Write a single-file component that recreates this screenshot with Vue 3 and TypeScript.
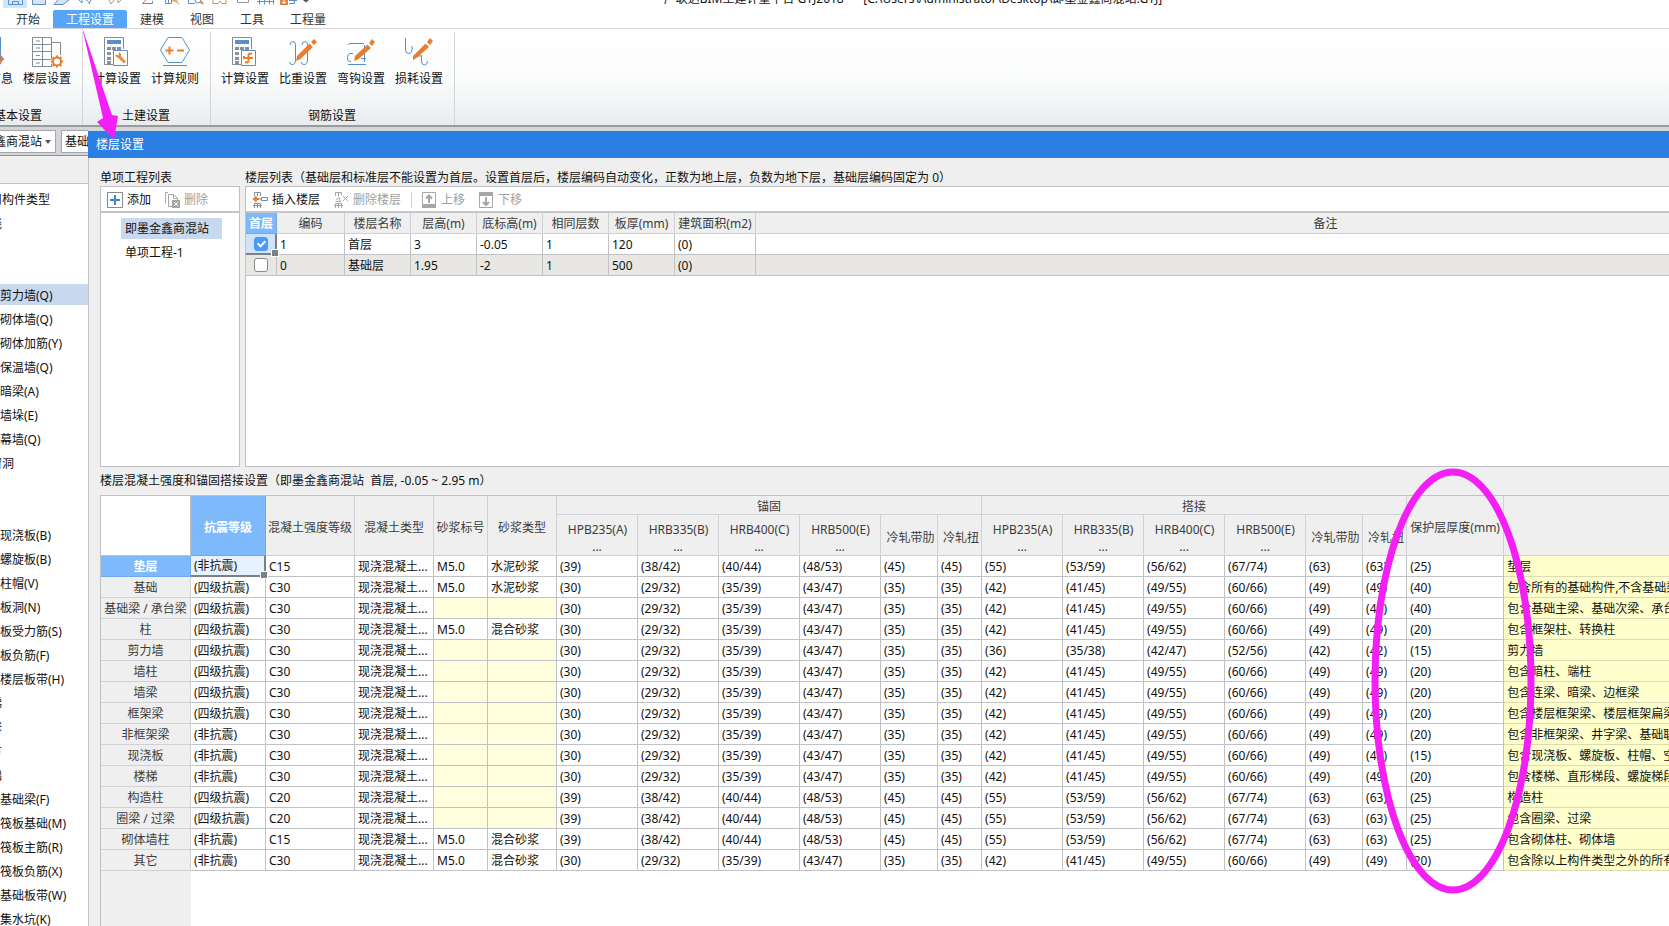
<script setup lang="ts">
import { ref } from 'vue'

const tabs = ['开始', '工程设置', '建模', '视图', '工具', '工程量']
const activeTab = ref('工程设置')

interface Tool { label: string; icon: string }
const groups: { title: string; cls: string; tools: Tool[] }[] = [
  { title: '基本设置', cls: 'group-basic', tools: [{ label: '工程信息', icon: 'info' }, { label: '楼层设置', icon: 'floor' }] },
  { title: '土建设置', cls: '', tools: [{ label: '计算设置', icon: 'calc-wrench' }, { label: '计算规则', icon: 'rule' }] },
  {
    title: '钢筋设置',
    cls: '',
    tools: [
      { label: '计算设置', icon: 'calc-bar' },
      { label: '比重设置', icon: 'weight' },
      { label: '弯钩设置', icon: 'hook' },
      { label: '损耗设置', icon: 'loss' },
    ],
  },
]

interface NavItem { text: string; sub?: boolean; selected?: boolean }
const nav: NavItem[] = [
  { text: '常用构件类型' },
  { text: '轴线' },
  { text: '柱' },
  { text: '墙' },
  { text: '剪力墙(Q)', sub: true, selected: true },
  { text: '砌体墙(Q)', sub: true },
  { text: '砌体加筋(Y)', sub: true },
  { text: '保温墙(Q)', sub: true },
  { text: '暗梁(A)', sub: true },
  { text: '墙垛(E)', sub: true },
  { text: '幕墙(Q)', sub: true },
  { text: '门窗洞' },
  { text: '梁' },
  { text: '板' },
  { text: '现浇板(B)', sub: true },
  { text: '螺旋板(B)', sub: true },
  { text: '柱帽(V)', sub: true },
  { text: '板洞(N)', sub: true },
  { text: '板受力筋(S)', sub: true },
  { text: '板负筋(F)', sub: true },
  { text: '楼层板带(H)', sub: true },
  { text: '楼梯' },
  { text: '装修' },
  { text: '土方' },
  { text: '基础' },
  { text: '基础梁(F)', sub: true },
  { text: '筏板基础(M)', sub: true },
  { text: '筏板主筋(R)', sub: true },
  { text: '筏板负筋(X)', sub: true },
  { text: '基础板带(W)', sub: true },
  { text: '集水坑(K)', sub: true },
]

const projects = ['即墨金鑫商混站', '单项工程-1']
const currentProject = ref(projects[0])

const floorHeads = ['编码', '楼层名称', '层高(m)', '底标高(m)', '相同层数', '板厚(mm)', '建筑面积(m2)']
const floors = ref([
  { first: true, cells: ['1', '首层', '3', '-0.05', '1', '120', '(0)'] },
  { first: false, cells: ['0', '基础层', '1.95', '-2', '1', '500', '(0)'] },
])

const steel = ['HPB235(A)', 'HRB335(B)', 'HRB400(C)', 'HRB500(E)']
const plainHeads = ['混凝土强度等级', '混凝土类型', '砂浆标号', '砂浆类型']

const A39 = ['(39)', '(38/42)', '(40/44)', '(48/53)', '(45)', '(45)', '(55)', '(53/59)', '(56/62)', '(67/74)', '(63)', '(63)']
const A30 = ['(30)', '(29/32)', '(35/39)', '(43/47)', '(35)', '(35)', '(42)', '(41/45)', '(49/55)', '(60/66)', '(49)', '(49)']
const WALL = ['(30)', '(29/32)', '(35/39)', '(43/47)', '(35)', '(35)', '(36)', '(35/38)', '(42/47)', '(52/56)', '(42)', '(42)']

interface Row { name: string; seismic: string; grade: string; mark: string; mortar: string; values: string[]; cover: string; note: string }
const row = (name: string, seismic: string, grade: string, mortar: string, values: string[], cover: string, note: string): Row => ({
  name, seismic, grade, mark: mortar ? 'M5.0' : '', mortar, values, cover, note,
})
const Q4 = '(四级抗震)'
const NO = '(非抗震)'
const rows: Row[] = [
  row('垫层', NO, 'C15', '水泥砂浆', A39, '(25)', '垫层'),
  row('基础', Q4, 'C30', '水泥砂浆', A30, '(40)', '包含所有的基础构件,不含基础梁'),
  row('基础梁 / 承台梁', Q4, 'C30', '', A30, '(40)', '包含基础主梁、基础次梁、承台梁'),
  row('柱', Q4, 'C30', '混合砂浆', A30, '(20)', '包含框架柱、转换柱'),
  row('剪力墙', Q4, 'C30', '', WALL, '(15)', '剪力墙'),
  row('墙柱', Q4, 'C30', '', A30, '(20)', '包含暗柱、端柱'),
  row('墙梁', Q4, 'C30', '', A30, '(20)', '包含连梁、暗梁、边框梁'),
  row('框架梁', Q4, 'C30', '', A30, '(20)', '包含楼层框架梁、楼层框架扁梁'),
  row('非框架梁', NO, 'C30', '', A30, '(20)', '包含非框架梁、井字梁、基础联系梁'),
  row('现浇板', NO, 'C30', '', A30, '(15)', '包含现浇板、螺旋板、柱帽、空心板'),
  row('楼梯', NO, 'C30', '', A30, '(20)', '包含楼梯、直形梯段、螺旋梯段'),
  row('构造柱', Q4, 'C20', '', A39, '(25)', '构造柱'),
  row('圈梁 / 过梁', Q4, 'C20', '', A39, '(25)', '包含圈梁、过梁'),
  row('砌体墙柱', NO, 'C15', '混合砂浆', A39, '(25)', '包含砌体柱、砌体墙'),
  row('其它', NO, 'C30', '混合砂浆', A30, '(20)', '包含除以上构件类型之外的所有构件'),
]
</script>

<template>
  <div class="app">
    <header class="titlebar">
      <div class="quick">
        <button class="q on" aria-label="保存"><svg viewBox="0 0 24 10"><path d="M5.500 0V4.500H19.500V0M9.500 4.500V1.500H15.500V4.500" /></svg></button>
        <button class="q" aria-label="新建"><svg viewBox="0 0 24 10"><path class="sky" d="M5.500 0V4.500H18.500V0" /></svg></button>
        <button class="q" aria-label="打开"><svg viewBox="0 0 24 10"><path class="sky" d="M7 0L3 4.500H12L18 0" /></svg></button>
        <button class="q" aria-label="撤销"><svg viewBox="0 0 24 10"><path d="M4 0L7 3V0M11 0C13 1 15 2 14 4M16 0L14 4" /></svg></button>
        <button class="q gap-s" aria-label="恢复"><svg viewBox="0 0 24 10"><path class="gray" d="M6 0L8 4M11 0L8 4M15 0V3L18 0" /></svg></button>
        <button class="q gap-l" aria-label="汇总"><svg viewBox="0 0 24 10"><path d="M10 0L6.500 3.500H16.500V1" /></svg></button>
        <button class="q" aria-label="查看"><svg viewBox="0 0 24 10"><path d="M5.500 0V3.500H11.500V0M8.500 0V3.500" /><path class="org" d="M12 1H18M14 0L19 4" /></svg></button>
        <button class="q" aria-label="查找"><svg viewBox="0 0 24 10"><path d="M4.500 0V3.500H11" /><circle cx="14" cy="0" r="3" /><path class="org" d="M16 1L19 4" stroke-width="2" /></svg></button>
        <button class="q" aria-label="绑定"><svg viewBox="0 0 24 10"><path class="org" d="M5 0V3.500H10L12 1L14 3.500H18V0" /></svg></button>
        <button class="q" aria-label="锁定"><svg viewBox="0 0 24 10"><path class="gray" d="M6.500 0V2.500H17.500V0" /></svg></button>
        <button class="q" aria-label="轴网"><svg viewBox="0 0 24 10"><path d="M3 1.500H20M5.500 0V4.500M10.500 0V4.500M15.500 0V4.500M19.500 0V4.500" /></svg></button>
        <button class="q" aria-label="添加"><svg viewBox="0 0 24 10"><path d="M12 3.500H17.500V0M12 0.500H20" /><path d="M3 0H11V5H3Z" class="solid" /><path class="wht" d="M7 0V4M5 2.500H9" /></svg></button>
        <button class="q narrow" aria-label="更多"><svg viewBox="0 0 12 10"><path class="tri" d="M3 0H9L6 2.500Z" /></svg></button>
      </div>
      <div class="title">广联达BIM土建计量平台 GTJ2018&nbsp; -&nbsp; &nbsp;[C:\Users\Administrator\Desktop\即墨金鑫商混站.GTJ]</div>
    </header>

    <nav class="tabs">
      <button v-for="t in tabs" :key="t" class="tab" :class="{ active: t === activeTab }" @click="activeTab = t">{{ t }}</button>
    </nav>

    <section class="ribbon">
      <div v-for="g in groups" :key="g.title" class="group" :class="g.cls">
        <div class="tools">
          <button v-for="t in g.tools" :key="t.label" class="tool">
            <svg class="ico" viewBox="0 0 32 32">
              <g v-if="t.icon === 'info'">
                <path class="b" d="M6 1.500H27.500V28H6" /><path class="bf" d="M6 1H28V7H6Z" />
                <circle class="o2" cx="25" cy="23" r="4" /><path class="o2" d="M25 17V19M25 27V30M19 23H21M29 23H31" />
              </g>
              <g v-else-if="t.icon === 'floor'">
                <path class="g" d="M1.500 1.500H20.500V30.500H1.500ZM11.500 1.500V30.500M1.500 8.500H20.500M1.500 15.500H20.500M1.500 23.500H20.500M5 5H9M5 12H9M5 19.500H9M5 27H9M20.500 6.500H29.500V19" />
                <circle class="whitefill" cx="26" cy="25.500" r="6" />
                <circle class="o2" cx="26" cy="25.500" r="4" />
                <path class="o2" d="M26 19.500V21M26 30V31.500M20 25.500H21.500M30.500 25.500H32M21.500 21.500L23 23M29 28.500L30.500 30M30.500 21L29 22.500M21.500 30L23 28.500" />
              </g>
              <g v-else-if="t.icon === 'rule'">
                <path class="b" d="M9 1.500H23L30.500 14L23 26.500H9L1.500 14ZM4 29.500H28" />
                <path class="o2" d="M6.500 14.500H14.500M10.500 10.500V18.500M18 14.500H25" />
              </g>
              <g v-else-if="t.icon === 'calc-wrench' || t.icon === 'calc-bar'">
                <path class="g" d="M3.500 1.500H22.500V13M3.500 1.500V28.500H12" />
                <path class="bf" d="M6 4H20V8H6Z" />
                <path class="gf" d="M6 11H10V14H6ZM11 11H15V14H11ZM16 11H20V14H16ZM6 16H10V19H6ZM6 21H10V24H6ZM6 25H10V28H6Z" />
                <path d="M12.500 14.500H26.500V29.500H12.500Z" class="b whitefill" />
                <template v-if="t.icon === 'calc-wrench'">
                  <path class="o3" d="M18 20.500L24 26.500" />
                  <path class="o2" d="M15 19A3 3 0 0 0 19 20A3 3 0 0 0 18 17" />
                </template>
                <path v-else class="o2" d="M23 18Q19.500 16.500 19.500 19.500V24.500Q19.500 27.500 16 26M15 22H24M15 20V23" />
              </g>
              <g v-else-if="t.icon === 'weight'">
                <path class="b" d="M3 9Q3 5.500 6 5.500Q8.500 5.500 8.500 9V24Q8.500 28.500 5 28.500Q3 28.500 2.500 26M15 9Q15 5.500 18 5.500Q20.500 5.500 20.500 9V24Q20.500 28.500 17 28.500Q14.500 28.500 14 26" />
                <path class="of" d="M10 20L22.500 7.500L26 11L13.500 23L9 25ZM24 6L27 3L30 6L27 9Z" />
              </g>
              <g v-else-if="t.icon === 'hook'">
                <path class="b" d="M3 9Q3 7.500 6 7.500H19M3 28.500H21M19.500 9V26M16 15.500H21M16 22.500H21M8 17.500H5Q2.500 18 2.500 23Q2.500 26 6 25.500" />
                <path class="of" d="M10 20L22.500 8.500L26 12L13.500 23L9 25ZM24 7L27 3L30 6L27 10Z" />
              </g>
              <g v-else>
                <path class="b" d="M2.500 2V14Q2.500 17.500 5.500 17.500Q9 17.500 9 13V10M12.500 20H19M18.500 19V25Q18.500 29 21.500 29Q24.500 29 24.500 25" />
                <path class="of" d="M10 20L22.500 7.500L26 11L13.500 22L10 24ZM24 6L27 2L30 5L27 9Z" />
              </g>
            </svg>
            <span>{{ t.label }}</span>
          </button>
        </div>
        <div class="gtitle">{{ g.title }}</div>
      </div>
    </section>

    <main class="work">
      <aside class="side">
        <div class="combos">
          <div class="combo first">
            <select aria-label="单项工程"><option>即墨金鑫商混站</option></select>
            <svg viewBox="0 0 6 4"><path class="tri" d="M0 0H6L3 4Z" /></svg>
          </div>
          <div class="combo second">
            <select aria-label="楼层"><option>基础层</option></select>
          </div>
        </div>
        <div class="side-head"></div>
        <ul class="nav">
          <li v-for="n in nav" :key="n.text" :class="{ selected: n.selected, sub: n.sub }"><a href="#">{{ n.text }}</a></li>
        </ul>
      </aside>

      <section class="dialog">
        <h1 class="dlg-title">楼层设置</h1>
        <div class="dlg-body">
          <div class="top">
            <div class="col projects">
              <h2>单项工程列表</h2>
              <div class="panel">
                <div class="bar">
                  <button class="act">
                    <svg viewBox="0 0 16 16"><path class="g" d="M0.500 0.500H15.500V15.500H0.500Z" /><path class="plus" d="M8 3V13M3 8H13" /></svg>添加
                  </button>
                  <button class="act" disabled>
                    <svg viewBox="0 0 16 16"><path class="dis" d="M1.500 11.500V0.500H4M4.500 2.500H9.500L13.500 6V9M9.500 2.500V6.500H13.500M4.500 2.500V14.500H8" /><path class="disf" d="M8 8H16V16H8Z" /><path class="wht" d="M10 10L14 14M14 10L10 14" /></svg>删除
                  </button>
                </div>
                <ul class="plist">
                  <li v-for="p in projects" :key="p"><button :class="{ on: p === currentProject }" @click="currentProject = p">{{ p }}</button></li>
                </ul>
              </div>
            </div>
            <div class="col floors">
              <h2>楼层列表（基础层和标准层不能设置为首层。设置首层后，楼层编码自动变化，正数为地上层，负数为地下层，基础层编码固定为 0）</h2>
              <div class="panel">
                <div class="bar">
                  <button class="act">
                    <svg viewBox="0 0 16 16"><path class="dis2" d="M2.500 4V0.500H8.500V4M5.500 0.500V4M2.500 16V11.500H8.500V16M5.500 11.500V16M1 13.500H10" /><path class="b" d="M9.500 5.500H15.500V8.500H9.500ZM7 7H9" /><path class="o2" d="M7 7H2M4.500 4.500L2 7L4.500 9.500" /></svg>插入楼层
                  </button>
                  <button class="act" disabled>
                    <svg viewBox="0 0 16 16"><path class="dis" d="M2.500 4V0.500H8.500V3M5.500 0.500V4M2.500 16V11.500H8.500V16M5.500 11.500V16M1 13.500H10M2.500 9.500H7.500L6 5.500L3 8M10 4L15 9M15 4L10 9" /></svg>删除楼层
                  </button>
                  <i class="sep"></i>
                  <button class="act" disabled>
                    <svg viewBox="0 0 16 16"><path class="dis" d="M1.500 0.500H14.500V14.500H1.500Z" /><path class="disf" d="M1 12H15V16H1Z" /><path class="dis d2" d="M8 11V3.500M5 6.500L8 3.500L11 6.500" /></svg>上移
                  </button>
                  <button class="act" disabled>
                    <svg viewBox="0 0 16 16"><path class="dis" d="M1.500 0.500H14.500V15.500H1.500Z" /><path class="disf" d="M1 0H15V4H1Z" /><path class="dis d2" d="M8 5V13M5 10L8 13L11 10" /></svg>下移
                  </button>
                </div>
                <table class="ftable">
                  <colgroup>
                    <col class="w31" /><col class="w68" /><col v-for="i in 5" :key="i" class="w66" /><col class="w81" /><col />
                  </colgroup>
                  <thead>
                    <tr><th class="hot">首层</th><th v-for="h in floorHeads" :key="h">{{ h }}</th><th>备注</th></tr>
                  </thead>
                  <tbody>
                    <tr v-for="(f, i) in floors" :key="i" :class="{ alt: i === 1 }">
                      <td class="chk" :class="{ cursor: i === 0 }"><input v-model="f.first" type="checkbox" :aria-label="f.cells[1]" /></td>
                      <td v-for="(c, j) in f.cells" :key="j">{{ c }}</td>
                      <td></td>
                    </tr>
                  </tbody>
                </table>
              </div>
            </div>
          </div>

          <h2 class="mid">楼层混凝土强度和锚固搭接设置（即墨金鑫商混站&nbsp; 首层, -0.05 ~ 2.95 m）</h2>
          <div class="panel concrete">
            <table class="ctable">
              <colgroup>
                <col class="w90" /><col class="w75" /><col class="w89" /><col class="w79" /><col class="w54" /><col class="w69" />
                <template v-for="k in 2" :key="k">
                  <col v-for="i in 4" :key="i" class="w81" /><col class="w57" /><col class="w44" />
                </template>
                <col class="w97" /><col />
              </colgroup>
              <thead>
                <tr class="h1">
                  <td rowspan="2" class="corner"></td>
                  <th rowspan="2" class="hot">抗震等级</th>
                  <th v-for="h in plainHeads" :key="h" rowspan="2">{{ h }}</th>
                  <th colspan="6">锚固</th>
                  <th colspan="6">搭接</th>
                  <th rowspan="2">保护层厚度(mm)</th>
                  <th rowspan="2" class="last"></th>
                </tr>
                <tr class="h2">
                  <template v-for="k in 2" :key="k">
                    <th v-for="s in steel" :key="s"><span class="grade">{{ s }}</span>...</th>
                    <th class="cold">冷轧带肋</th>
                    <th class="cold">冷轧扭</th>
                  </template>
                </tr>
              </thead>
              <tbody>
                <tr v-for="(r, i) in rows" :key="r.name">
                  <th scope="row" :class="{ hot: i === 0 }">{{ r.name }}</th>
                  <td :class="{ cursor: i === 0 }">{{ r.seismic }}</td>
                  <td>{{ r.grade }}</td>
                  <td>现浇混凝土...</td>
                  <td :class="{ pale: !r.mark }">{{ r.mark }}</td>
                  <td :class="{ pale: !r.mortar }">{{ r.mortar }}</td>
                  <td v-for="(v, j) in r.values" :key="j">{{ v }}</td>
                  <td>{{ r.cover }}</td>
                  <td class="note">{{ r.note }}</td>
                </tr>
              </tbody>
            </table>
            <div class="rest"></div>
          </div>
        </div>
      </section>
    </main>

    <svg class="marks" width="1669" height="926" viewBox="0 0 1669 926" aria-hidden="true">
      <path class="arrow" d="M82 27L112 115L118 116L114 140L97 122L103 118Z" />
      <ellipse class="ring" cx="1453" cy="681" rx="78" ry="209" />
    </svg>
  </div>
</template>

<style>
body { background: #fff; overflow: hidden; }
</style>

<style scoped>
.app {
  position: relative;
  display: flex;
  flex-direction: column;
  height: 100vh;
  overflow: hidden;
  font: 12px/18px "Noto Sans", "Noto Sans CJK SC", sans-serif;
  color: #111;
  background: #fff;
}
.app * { box-sizing: border-box; }
button, select, input { font: inherit; color: inherit; margin: 0; padding: 0; border: 0; background: none; }
ul { margin: 0; padding: 0; list-style: none; }
h1, h2 { margin: 0; font-size: 12px; font-weight: 400; }
svg { flex: none; }
svg path, svg circle { fill: none; }

.titlebar { display: flex; height: 10px; flex: none; overflow: hidden; }
.quick { display: flex; padding-left: 3px; width: 312px; flex: none; }
.q { width: 24px; height: 8px; flex: none; }
.q svg { display: block; width: 24px; height: 10px; stroke: #5b8fc9; }
.q.on { background: #d3e5fa; }
.q.narrow, .q.narrow svg { width: 12px; }
.gap-s { margin-left: 4px; }
.gap-l { margin-left: 9px; }
.q:nth-child(n+10) { margin-left: -1px; }
svg path.sky { fill: #d5e5f7; }
svg path.gray { stroke: #9a9a9a; }
svg path.org { stroke: #e08a3c; }
svg path.solid { fill: #e8803a; stroke: none; }
svg path.wht { stroke: #fff; }
svg path.tri { fill: #555; stroke: none; }
.title { flex: 1; display: flex; align-items: flex-end; justify-content: center; height: 8px; padding-right: 155px; white-space: nowrap; }

.tabs { display: flex; height: 19px; flex: none; padding-left: 3px; border-bottom: 1px solid #d4d6da; }
.tab { padding: 0 13px; height: 18px; line-height: 20px; color: #333; }
.tab.active { background: #56a5f8; color: #fff; border-radius: 2px 2px 0 0; }

.ribbon { display: flex; flex: none; height: 98px; border-bottom: 2px solid #999c9f; background: linear-gradient(#fff 0%, #fbfcfc 50%, #e9ecee 100%); }
.group { display: flex; flex-direction: column; justify-content: space-between; padding: 4px 6px 0 5px; margin-top: 3px; border-right: 1px solid #d2d4d7; }
.group-basic { margin-left: -45px; }
.tools { display: flex; }
.tool { width: 58px; display: flex; flex-direction: column; align-items: center; gap: 2px; white-space: nowrap; }
.ico { width: 32px; height: 32px; }
.gtitle { text-align: center; }
svg .g { stroke: #858b93; }
svg .b { stroke: #5a8fcb; }
svg .bf { fill: #5a8fcb; }
svg .gf { fill: #8b8f96; }
svg .whitefill { fill: #fff; }
svg .o2 { stroke: #ea7c2d; stroke-width: 2; }
svg .o3 { stroke: #ea8a3d; stroke-width: 3; }
svg .of { fill: #ea7c2d; }

.work { flex: 1; min-height: 0; display: flex; background: #d3d5d8; }
.side { width: 88px; flex: none; display: flex; flex-direction: column; overflow: hidden; }
.combos { display: flex; gap: 5px; height: 29px; flex: none; padding-top: 3px; border-bottom: 1px solid #8f9195; }
.combo { display: flex; align-items: center; height: 23px; background: #fff; border: 1px solid #a5a7aa; flex: none; }
.combo select { appearance: none; height: 20px; outline: none; }
.combo.first { margin-left: -48px; width: 104px; padding-left: 5px; }
.combo.first select { width: 87px; }
.combo.first svg { width: 6px; height: 4px; }
.combo.second { width: 90px; padding-left: 3px; }
.side-head { height: 28px; flex: none; background: #efefef; border-bottom: 1px solid #c3c5c8; }
.nav { flex: 1; min-height: 0; overflow: hidden; background: #fff; padding-top: 4px; }
.nav li { height: 21px; margin-bottom: 3px; line-height: 24px; white-space: nowrap; }
.nav a { color: inherit; text-decoration: none; margin-left: -22px; }
.nav .sub a { margin-left: 0; }
.nav .selected { background: #c8d8ef; }

.dialog { flex: 1; min-width: 0; margin-top: 4px; display: flex; flex-direction: column; background: #efefef; }
.dlg-title { height: 27px; flex: none; padding-left: 8px; line-height: 27px; color: #fff; background: #2c7fe2; }
.dlg-body { flex: 1; min-height: 0; display: flex; flex-direction: column; padding: 11px 0 0 11px; border-left: 1px solid #c0c2c5; }
.top { display: flex; gap: 5px; height: 298px; flex: none; }
.col { display: flex; flex-direction: column; }
.projects { width: 140px; flex: none; }
.floors { flex: 1; min-width: 0; }
h2 { height: 17px; line-height: 18px; flex: none; white-space: nowrap; }
h2.mid { height: 28px; line-height: 27px; }
.panel { flex: 1; min-height: 0; background: #fff; border: 1px solid #bfc1c4; overflow: hidden; }
.floors .panel, .panel.concrete { border-right: 0; }
.bar { display: flex; align-items: center; height: 26px; padding: 2px 0 0 6px; border-bottom: 2px solid #c3c5c8; }
.act { display: flex; align-items: center; gap: 4px; margin-right: 13px; white-space: nowrap; }
.act svg { width: 16px; height: 16px; }
.act:disabled { color: #a0a0a0; }
.sep { width: 1px; height: 16px; margin: 0 9px 0 -3px; background: #d0d0d0; }
svg .plus { stroke: #3f87d6; stroke-width: 2; }
svg .dis { stroke: #a6a6a6; }
svg .d2 { stroke-width: 2; }
svg .disf { fill: #a6a6a6; }
svg .dis2 { stroke: #8b8f96; }
.plist { padding: 5px 17px 0 20px; }
.plist li { margin-bottom: 3px; }
.plist button { display: block; width: 100%; height: 21px; line-height: 21px; padding-left: 4px; text-align: left; white-space: nowrap; }
.plist .on { background: #c8d8ef; }

table { table-layout: fixed; border-collapse: separate; border-spacing: 0; }
th, td { height: 21px; padding: 2px 0 0 3px; line-height: 18px; border-right: 1px solid #c0c2c6; border-bottom: 1px solid #c0c2c6; white-space: nowrap; overflow: hidden; text-align: left; font-weight: 400; }
th { padding: 2px 0 0; text-align: center; color: #3c3c3c; background: #efefef; border-color: #cfd1d4; }
th.hot { background: #7eb9fb; color: #fff; font-weight: 700; border-color: #6faaf0; }
.ftable { width: calc(100% + 227px); }
.alt td { background: #e8e7e4; }
.cursor { position: relative; overflow: visible; padding-top: 1px; background: #e6f2fe; border-right: 2px solid #7b7f86; border-bottom: 2px solid #7b7f86; }
.cursor::after { content: ""; position: absolute; right: -4px; bottom: -4px; width: 6px; height: 6px; background: #7b7f86; border: 1px solid #fff; }
td.chk { padding: 0; text-align: center; line-height: 0; }
.chk.cursor { background: #cfe4fb; }
.chk input { appearance: none; width: 14px; height: 14px; vertical-align: middle; border: 1px solid #8a8a8a; border-radius: 3px; background: #fff; }
.chk input:checked { border-color: #4b9bf5; background: #4b9bf5; position: relative; }
.chk input:checked::after { content: ""; position: absolute; left: 4px; top: 1px; width: 5px; height: 8px; border: solid #fff; border-width: 0 2px 2px 0; transform: rotate(45deg); box-sizing: border-box; }

.concrete { display: flex; flex-direction: column; border-bottom: 0; }
.ctable { width: 100%; flex: none; }
.h1 th { height: 19px; padding-top: 3px; line-height: 15px; }
.h1 th.last { border-right: 0; }
.h2 th { height: 41px; padding-top: 5px; line-height: 17px; }
.corner { background: #fff; }
.grade { display: block; padding-left: 1px; }
.h2 th.cold { padding-left: 3px; }
.pale { background: #ffffde; }
.note { background: #ffffcc; border-right: 0; border-color: #dcdcb4; }
.rest { flex: 1; width: 90px; background: #efefef; }
.w31 { width: 31px; } .w44 { width: 44px; } .w54 { width: 54px; } .w57 { width: 57px; }
.w66 { width: 66px; } .w68 { width: 68px; } .w69 { width: 69px; } .w75 { width: 75px; }
.w79 { width: 79px; } .w81 { width: 81px; } .w89 { width: 89px; } .w90 { width: 90px; } .w97 { width: 97px; }

.marks { position: absolute; left: 0; top: 0; pointer-events: none; }
.marks .arrow { fill: #f31ff5; }
.marks .ring { fill: none; stroke: #f31ff5; stroke-width: 7; }
</style>
